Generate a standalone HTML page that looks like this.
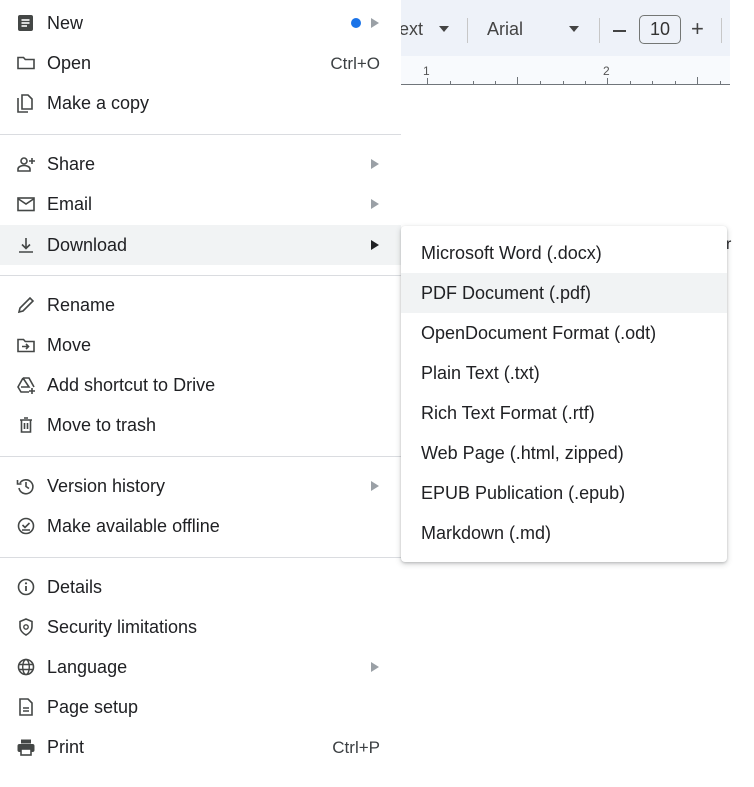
<!DOCTYPE html>
<html><head><meta charset="utf-8"><style>
*{margin:0;padding:0;box-sizing:border-box}
body{width:754px;height:787px;overflow:hidden;background:#fff;font-family:"Liberation Sans",Arial,sans-serif;color:#202124;position:relative}
.tb{position:absolute;left:401px;top:0;width:329px;height:56px;background:#eef2f9}
.ruler{position:absolute;left:401px;top:56px;width:329px;height:29px;background:#f8fafd;border-bottom:1px solid #70757a}
.menu{position:absolute;left:0;top:0;width:401px;height:775px;background:#fff}
.row{position:absolute;left:0;width:401px;height:40px;font-size:18px;line-height:41px}
.row .t{position:absolute;left:47px;top:0}
.row svg{position:absolute;left:16px;top:10px;width:20px;height:20px}
.row .k{position:absolute;right:21px;top:0;color:#3c4043;font-size:17px}
.row .a{position:absolute;left:371px;top:15px;width:0;height:0;border-left:8px solid #9aa0a6;border-top:5px solid transparent;border-bottom:5px solid transparent}
.hl{background:#f1f3f4}
.div{position:absolute;left:0;width:401px;height:1px;background:#dadce0}
.sub{position:absolute;left:401px;top:226px;width:326px;height:336px;background:#fff;border-radius:4px;box-shadow:0 2px 6px rgba(60,64,67,.25),0 1px 2px rgba(60,64,67,.2)}
.si{position:absolute;left:0;width:326px;height:40px;line-height:41px;font-size:18px;padding-left:20px}
</style></head><body>
<div class="tb">
<span style="position:absolute;left:-2px;top:19px;font-size:18px;color:#444">ext</span>
<span style="position:absolute;left:38px;top:26px;border-top:6px solid #444;border-left:5px solid transparent;border-right:5px solid transparent"></span>
<div style="position:absolute;left:66px;top:18px;width:1px;height:25px;background:#c7c7c7"></div>
<span style="position:absolute;left:86px;top:19px;font-size:18px;color:#444">Arial</span>
<span style="position:absolute;left:168px;top:26px;border-top:6px solid #444;border-left:5px solid transparent;border-right:5px solid transparent"></span>
<div style="position:absolute;left:198px;top:18px;width:1px;height:25px;background:#c7c7c7"></div>
<div style="position:absolute;left:212px;top:30px;width:13px;height:2px;background:#444"></div>
<div style="position:absolute;left:238px;top:15px;width:42px;height:29px;border:1px solid #747775;border-radius:5px;font-size:18px;color:#333;text-align:center;line-height:27px">10</div>
<span style="position:absolute;left:290px;top:16px;font-size:22px;color:#444">+</span>
<div style="position:absolute;left:320px;top:18px;width:1px;height:25px;background:#c7c7c7"></div>
</div>
<div class="ruler">
<span style="position:absolute;left:22px;top:8px;font-size:12px;color:#555">1</span>
<span style="position:absolute;left:202px;top:8px;font-size:12px;color:#555">2</span>
<svg style="position:absolute;left:0;top:0" width="329" height="29"><g stroke="#70757a" stroke-width="1">
<line x1="26.5" y1="22" x2="26.5" y2="29"/><line x1="49.5" y1="25" x2="49.5" y2="29"/><line x1="72.5" y1="25" x2="72.5" y2="29"/><line x1="94.5" y1="25" x2="94.5" y2="29"/><line x1="116.5" y1="21" x2="116.5" y2="29"/><line x1="139.5" y1="25" x2="139.5" y2="29"/><line x1="162.5" y1="25" x2="162.5" y2="29"/><line x1="184.5" y1="25" x2="184.5" y2="29"/><line x1="206.5" y1="22" x2="206.5" y2="29"/><line x1="229.5" y1="25" x2="229.5" y2="29"/><line x1="251.5" y1="25" x2="251.5" y2="29"/><line x1="274.5" y1="25" x2="274.5" y2="29"/><line x1="296.5" y1="21" x2="296.5" y2="29"/><line x1="319.5" y1="25" x2="319.5" y2="29"/></g></svg>
</div>
<span style="position:absolute;left:726px;top:236px;font-size:16px">r</span>
<div class="menu">
<div class="row" style="top:3px"><svg viewBox="0 0 20 20"><rect x="2" y="2" width="15" height="16" rx="2" fill="#444746"/><g stroke="#fff" stroke-width="1.6"><line x1="5.5" y1="7" x2="13.5" y2="7"/><line x1="5.5" y1="10" x2="13.5" y2="10"/><line x1="5.5" y1="13" x2="11" y2="13"/></g></svg><span class="t">New</span><span style="position:absolute;left:351px;top:15px;width:10px;height:10px;border-radius:50%;background:#1a73e8"></span><span class="a"></span></div>
<div class="row" style="top:43px"><svg viewBox="0 0 20 20"><path d="M2 4.5h5.5l1.8 2H18v9H2z" fill="none" stroke="#444746" stroke-width="1.6"/></svg><span class="t">Open</span><span class="k">Ctrl+O</span></div>
<div class="row" style="top:83px"><svg viewBox="0 0 20 20"><path d="M6 2h6l4 4v10H6z M2 5v14h10" fill="none" stroke="#444746" stroke-width="1.6"/></svg><span class="t">Make a copy</span></div>
<div class="div" style="top:134px"></div>
<div class="row" style="top:144px"><svg viewBox="0 0 20 20"><circle cx="8" cy="7" r="3" fill="none" stroke="#444746" stroke-width="1.6"/><path d="M2 17v-2c0-2 3-3.5 6-3.5s6 1.5 6 3.5v2z" fill="none" stroke="#444746" stroke-width="1.6"/><path d="M16 4v6M13 7h6" stroke="#444746" stroke-width="1.6"/></svg><span class="t">Share</span><span class="a"></span></div>
<div class="row" style="top:184px"><svg viewBox="0 0 20 20"><rect x="2" y="4" width="16" height="12.5" fill="none" stroke="#444746" stroke-width="1.6"/><path d="M2.5 5l7.5 5 7.5-5" fill="none" stroke="#444746" stroke-width="1.6"/></svg><span class="t">Email</span><span class="a"></span></div>
<div class="row hl" style="top:225px"><svg viewBox="0 0 20 20"><path d="M10 3v10M6 9.5l4 4 4-4M3 17h14" fill="none" stroke="#444746" stroke-width="1.6"/></svg><span class="t">Download</span><span class="a" style="border-left-color:#202124"></span></div>
<div class="div" style="top:275px"></div>
<div class="row" style="top:285px"><svg viewBox="0 0 20 20"><path d="M3 17l1-4L14 3l3 3L7 16z" fill="none" stroke="#444746" stroke-width="1.6"/></svg><span class="t">Rename</span></div>
<div class="row" style="top:325px"><svg viewBox="0 0 20 20"><path d="M2 4.5h5.5l1.8 2H18v10H2z" fill="none" stroke="#444746" stroke-width="1.6"/><path d="M6 11.5h6M10 9l2.5 2.5L10 14" fill="none" stroke="#444746" stroke-width="1.6"/></svg><span class="t">Move</span></div>
<div class="row" style="top:365px"><svg viewBox="0 0 20 20"><path d="M7 3h6l5 9M7 3l-5 9 3 5h8M7 3l6 9H5" fill="none" stroke="#444746" stroke-width="1.6"/><path d="M16 13v6M13 16h6" stroke="#444746" stroke-width="1.6"/></svg><span class="t">Add shortcut to Drive</span></div>
<div class="row" style="top:405px"><svg viewBox="0 0 20 20"><path d="M4 5h12M8 3h4M5.5 5v12h9V5M8.5 8v6M11.5 8v6" fill="none" stroke="#444746" stroke-width="1.6"/></svg><span class="t">Move to trash</span></div>
<div class="div" style="top:456px"></div>
<div class="row" style="top:466px"><svg viewBox="0 0 20 20"><path d="M4 7a7 7 0 1 1-1 5" fill="none" stroke="#444746" stroke-width="1.6"/><path d="M1.5 4v4h4" fill="none" stroke="#444746" stroke-width="1.6"/><path d="M10 6v4.5l3 2" fill="none" stroke="#444746" stroke-width="1.6"/></svg><span class="t">Version history</span><span class="a"></span></div>
<div class="row" style="top:506px"><svg viewBox="0 0 20 20"><circle cx="10" cy="10" r="7.5" fill="none" stroke="#444746" stroke-width="1.6"/><path d="M6.5 9l2.5 2.5 4.5-4.5M6 14h8" fill="none" stroke="#444746" stroke-width="1.6"/></svg><span class="t">Make available offline</span></div>
<div class="div" style="top:557px"></div>
<div class="row" style="top:567px"><svg viewBox="0 0 20 20"><circle cx="10" cy="10" r="7.5" fill="none" stroke="#444746" stroke-width="1.6"/><path d="M10 9v5" stroke="#444746" stroke-width="1.8"/><circle cx="10" cy="6.3" r="1.1" fill="#444746"/></svg><span class="t">Details</span></div>
<div class="row" style="top:607px"><svg viewBox="0 0 20 20"><path d="M10 2l6 2.5v5c0 4-3 7-6 8.5-3-1.5-6-4.5-6-8.5v-5z" fill="none" stroke="#444746" stroke-width="1.6"/><circle cx="10" cy="10" r="2.2" fill="none" stroke="#444746" stroke-width="1.4"/></svg><span class="t">Security limitations</span></div>
<div class="row" style="top:647px"><svg viewBox="0 0 20 20"><circle cx="10" cy="10" r="7.5" fill="none" stroke="#444746" stroke-width="1.6"/><ellipse cx="10" cy="10" rx="3.3" ry="7.5" fill="none" stroke="#444746" stroke-width="1.4"/><path d="M2.5 7.5h15M2.5 12.5h15" stroke="#444746" stroke-width="1.4"/></svg><span class="t">Language</span><span class="a"></span></div>
<div class="row" style="top:687px"><svg viewBox="0 0 20 20"><path d="M4 2h8l4 4v12H4z" fill="none" stroke="#444746" stroke-width="1.6"/><path d="M7 11h6M7 14h6" stroke="#444746" stroke-width="1.4"/></svg><span class="t">Page setup</span></div>
<div class="row" style="top:727px"><svg viewBox="0 0 20 20"><rect x="5" y="2.5" width="10" height="4" fill="#444746"/><rect x="1.5" y="7" width="17" height="8" rx="2" fill="#444746"/><rect x="5" y="12" width="10" height="6" fill="#fff" stroke="#444746" stroke-width="1.6"/></svg><span class="t">Print</span><span class="k">Ctrl+P</span></div>
</div>
<div class="sub">
<div class="si" style="top:7px">Microsoft Word (.docx)</div>
<div class="si hl" style="top:47px">PDF Document (.pdf)</div>
<div class="si" style="top:87px">OpenDocument Format (.odt)</div>
<div class="si" style="top:127px">Plain Text (.txt)</div>
<div class="si" style="top:167px">Rich Text Format (.rtf)</div>
<div class="si" style="top:207px">Web Page (.html, zipped)</div>
<div class="si" style="top:247px">EPUB Publication (.epub)</div>
<div class="si" style="top:287px">Markdown (.md)</div>
</div>
</body></html>
